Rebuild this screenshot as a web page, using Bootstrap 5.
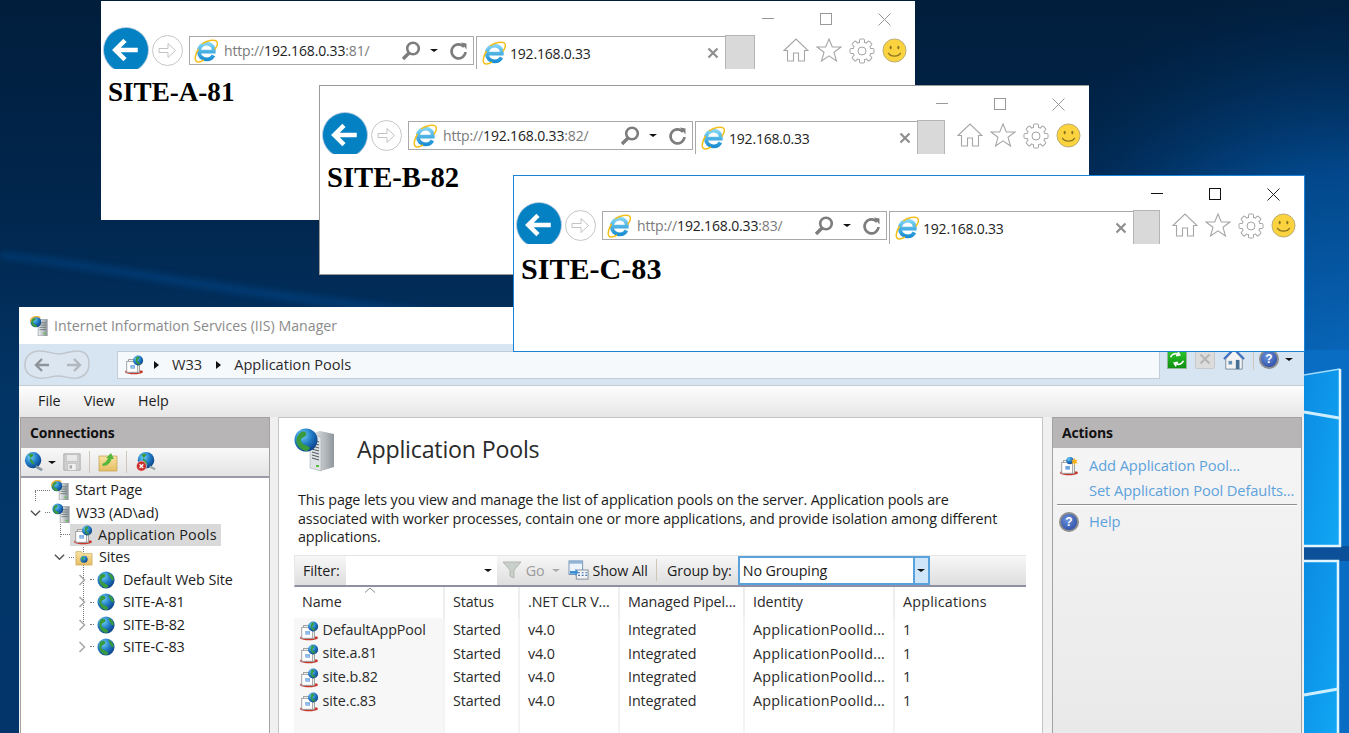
<!DOCTYPE html>
<html lang="en">
<head>
<meta charset="UTF-8">
<title>IIS sites</title>
<meta name="viewport" content="width=device-width, initial-scale=1">
<link href="https://cdn.jsdelivr.net/npm/bootstrap@5.3.0/dist/css/bootstrap.min.css" rel="stylesheet">
<style>
html, body { margin: 0; height: 733px; overflow: hidden; background: #02254b; }
.desk { position: relative; width: 1349px; height: 733px; overflow: hidden; font-family: "Open Sans", "Noto Sans", sans-serif; font-size: 13.3px; color: #1c1c1c; }
.wallpaper { position: absolute; left: 0; top: 0; }

/* browser windows */
.ie-win { position: absolute; background: #fff; display: flex; flex-direction: column; }
.ie-a { left: 101px; top: 1px; width: 814px; height: 219px; z-index: 1; }
.ie-b { left: 320px; top: 85px; height: 190px; z-index: 2; border: 1px solid #9b9b9b; border-right: 0; margin-left: -1px; width: 770px; }
.ie-c { left: 514px; top: 175px; height: 177px; z-index: 4; border: 1px solid #1883d7; margin-left: -1px; width: 792px; }
.ie-caption { height: 26px; position: relative; flex: none; }
.ie-min { position: absolute; right: 141px; top: 17px; width: 12px; height: 1px; background: #999; }
.ie-max { position: absolute; right: 83px; top: 12px; width: 12px; height: 12px; border: 1px solid #999; }
.ie-close { position: absolute; right: 24px; top: 12px; width: 13px; height: 13px; }
.ie-c .ie-min { background: #111; }
.ie-c .ie-max { border-color: #111; }
.ie-bar { height: 42px; flex: none; overflow: hidden; padding-left: 2px; }
.ie-back { width: 46px; height: 46px; flex: none; }
.ie-fwd { width: 31px; height: 31px; margin-left: 3px; margin-right: 6px; flex: none; }
.ie-addr { width: 285px; height: 29px; border: 1px solid #a9a9a9; margin-top: 9px; padding-left: 4px; padding-right: 4px; flex: none; font-size: 14px; color: #7a7a7a; letter-spacing: -.15px; }
.ie-addr b { font-weight: 400; color: #222; }
.ie-addr > svg { margin-right: 6px; }
.ie-addr-tools { gap: 9px; }
.ie-addr-tools .iis-down { margin-right: 2px; }
.ie-tab { height: 33px; margin-top: 9px; margin-left: 2px; border-left: 1px solid #a9a9a9; border-top: 1px solid #a9a9a9; padding-left: 5px; padding-right: 2px; flex: 1 1 auto; font-size: 14px; color: #222; letter-spacing: -.2px; }
.ie-new { width: 30px; height: 34px; background: #d9d9d9; border: 1px solid #b5b5b5; border-bottom: 0; margin-top: 8px; flex: none; }
.ie-tools { width: 160px; flex: none; padding: 11px 8px 0 0; gap: 7px; justify-content: flex-end; }
.ie-b .ie-new { width: 28px; }
.ie-c .ie-new { width: 27px; }
.ie-b .ie-tools, .ie-c .ie-tools { width: 144px; }
.ie-page { font-family: "Liberation Serif", serif; font-weight: 700; font-size: 27.1px; line-height: 32px; color: #000; padding: 7px 0 0 7px; margin: 0; }
.ie-b .ie-page { font-size: 28.65px; }
.ie-c .ie-page { font-size: 30.1px; padding-top: 9px; }

/* iis manager */
.iis-win { position: absolute; left: 19px; top: 307px; width: 1285px; height: 426px; z-index: 3; background: #f0f0f0; display: flex; flex-direction: column; }
.iis-title { height: 37px; background: #fff; color: #8b8b8b; font-size: 14.2px; padding-left: 10px; gap: 5px; flex: none; }
.iis-nav { height: 42px; background: #d7e4f1; border-bottom: 1px solid #c3cbd3; padding: 0 6px 0 4px; flex: none; }
.iis-crumb { width: 1043px; height: 28px; margin-left: 26px; background: #f6f9fc; border: 1px solid #c2ccd6; padding-left: 6px; gap: 6px; flex: none; font-size: 14.6px; color: #2a2a2a; }
.iis-crumb svg { margin-right: -4px; }
.iis-tri { width: 0; height: 0; border-left: 5px solid #111; border-top: 4px solid transparent; border-bottom: 4px solid transparent; margin: 0 7px 0 8px; }
.iis-down { width: 0; height: 0; border-top: 3px solid #111; border-left: 4px solid transparent; border-right: 4px solid transparent; }
.iis-navtools { margin-left: 7px; gap: 8px; margin-top: -11px; }
.iis-navtools .iis-sep { margin: 0; }
.iis-navtools .iis-help { margin-left: -3px; margin-right: -2px; }
.iis-menu { height: 31px; background: linear-gradient(#fdfdfd, #e6e6e6); padding-left: 19px; padding-bottom: 2px; gap: 23px; flex: none; font-size: 14.3px; color: #1c1c1c; }
.iis-body { flex: 1 1 auto; min-height: 0; padding-left: 1px; gap: 8px; }
.iis-side { width: 250px; flex: none; background: #fff; border: 1px solid #a2a2a2; border-bottom: 0; }
.iis-actions { width: 250px; flex: none; background: linear-gradient(#f6f6f6, #e9e9e9); border: 1px solid #a2a2a2; border-bottom: 0; margin-left: 1px; }
.iis-head { height: 30px; background: #b8b5b6; font-weight: 700; padding-left: 9px; padding-bottom: 1px; font-size: 14px; color: #111; letter-spacing: -.2px; flex: none; }
.iis-tbar { height: 30px; background: linear-gradient(#f8f8f8, #e4e4e4); border-bottom: 2px solid #9a9aa8; padding-left: 2px; gap: 3px; }
.iis-sep { width: 1px; height: 22px; background: #cfc8b8; margin: 0 5px; flex: none; }
.iis-tree { padding-top: 1px; font-size: 14.4px; letter-spacing: -.1px; }
.iis-node { height: 22.4px; position: relative; }
.iis-node svg { flex: none; }
.iis-lbl { padding: 0 3px; margin-left: 2px; line-height: 22px; }
.iis-lbl-site { margin-left: 5px; }
.iis-sel { background: #d9d9d9; padding-left: 3px; padding-right: 1px; }
.iis-sel .iis-lbl { letter-spacing: .2px; }
.iis-dots { width: 9px; height: 0; border-top: 1px dotted #777; flex: none; }
.iis-vdots { position: absolute; width: 0; border-left: 1px dotted #777; }
.iis-center { width: 765px; flex: none; background: #fff; border: 1px solid #c4c4c4; border-bottom: 0; padding: 0 16px 0 15px; }
.iis-h { height: 62px; gap: 21px; padding-top: 1px; margin-bottom: 11px; }
.iis-h span { font-size: 23.2px; color: #2a2a2a; letter-spacing: -.2px; }
.iis-desc { font-size: 14.35px; line-height: 18.6px; margin: 0 0 8px 4px; letter-spacing: -.13px; width: 720px; }
.iis-filter { height: 32px; background: linear-gradient(#f7f7f7, #dedede); border-top: 1px solid #e4e4e4; border-bottom: 2px solid #8f8fa3; border-left: 1px solid #e8e8e8; padding-left: 8px; font-size: 14.3px; letter-spacing: -.1px; }
.iis-filter .iis-sep { margin: 0 10px 0 8px; }
.iis-input { width: 151px; height: 29px; background: #fff; margin-left: 6px; margin-right: 5px; padding-right: 5px; flex: none; }
.iis-grey { color: #9a9a9a; }
.iis-select { width: 192px; height: 29px; margin-left: 6px; border: 2px solid #5aa2dc; background: #fff; padding-left: 3px; flex: none; }
.iis-select i { width: 15px; height: 100%; background: #cfe6fa; border-left: 2px solid #5aa2dc; }
table.iis-grid { --bs-table-bg: transparent; table-layout: fixed; width: 733px; font-size: 14.3px; letter-spacing: -.1px; color: #2a2a2a; margin: 0; }
.iis-grid th { font-weight: 400; height: 31px; padding: 0 0 1px 8px !important; vertical-align: middle; border-right: 2px solid #eee; position: relative; background: #fff; }
.iis-grid th:last-child, .iis-grid td:last-child { border-right: 0; }
.iis-grid th:last-child { letter-spacing: .2px; }
.iis-grid td { height: 23.7px; padding: 0 0 0 8px !important; vertical-align: middle; border-right: 2px solid #f3f3f3; white-space: nowrap; }
.iis-grid td:nth-child(5) { letter-spacing: .2px; }
.iis-grid td:first-child { background: #f7f7f7; padding-left: 5px !important; }
.iis-grid tr.iis-rest td { height: 40px; }
.iis-caret { position: absolute; left: 70px; top: 0; width: 12px; height: 6px; }
.iis-link { color: #5ea2dc; font-size: 14.7px; letter-spacing: -.1px; }
.iis-act { height: 25px; padding-left: 6px; gap: 10px; }
.iis-act-first { margin-top: 5px; }
.iis-act-sep { height: 0; border-top: 1px solid #8f8f8f; margin: 1px 4px 4px 4px; box-shadow: 0 1px 0 #fff; }
.iis-help { width: 20px; height: 20px; border-radius: 50%; flex: none; background: radial-gradient(circle at 40% 35%, #6d93dc, #1f3f9c); border: 2px solid #8d8d8d; color: #fff; font: 700 12px/16px "Liberation Sans", sans-serif; text-align: center; }
</style>
</head>
<body>

<svg width="0" height="0" style="position:absolute">
  <defs>
    <radialGradient id="gradGlobe" cx="35%" cy="30%" r="75%"><stop offset="0" stop-color="#6fd0f5"/><stop offset=".55" stop-color="#1f79c4"/><stop offset="1" stop-color="#0c3f86"/></radialGradient>
    <linearGradient id="gradTower" x1="0" x2="1" y1="0" y2="0"><stop offset="0" stop-color="#f2f2f2"/><stop offset="1" stop-color="#8f979d"/></linearGradient>
    <linearGradient id="gradFolder" x1="0" x2="0" y1="0" y2="1"><stop offset="0" stop-color="#f8e3a4"/><stop offset="1" stop-color="#e5bd63"/></linearGradient>
    <linearGradient id="gradGreen" x1="0" x2="0" y1="0" y2="1"><stop offset="0" stop-color="#2ec92e"/><stop offset="1" stop-color="#0f8f0f"/></linearGradient>
    <linearGradient id="gradIe" x1="0" x2="0" y1="0" y2="1"><stop offset="0" stop-color="#7fd4f5"/><stop offset="1" stop-color="#1b8fd3"/></linearGradient>
  </defs>
  <symbol id="icoBack" viewBox="0 0 45 45"><circle cx="22.5" cy="22.5" r="22" fill="#0481c3" stroke="#bcd" stroke-width=".8"/><path d="M12 22.5h22M21.5 13l-9.5 9.5 9.5 9.5" fill="none" stroke="#fff" stroke-width="4.4"/></symbol>
  <symbol id="icoFwd" viewBox="0 0 31 31"><circle cx="15.5" cy="15.5" r="15" fill="#fff" stroke="#c6c6c6"/><path d="M7 13.5h9V8.5l7.5 7-7.5 7v-5H7z" fill="#fff" stroke="#c2c2c2"/></symbol>
  <symbol id="icoIe" viewBox="0 0 24 24"><path d="M6 12.600h13.800c.4-5-2.900-8-7.100-8-4.500 0-7.900 3.300-7.900 8 0 4.500 3.400 7.800 7.900 7.800 3.100 0 5.500-1.400 6.700-4" fill="none" stroke="url(#gradIe)" stroke-width="3.800"/><path d="M8 5C13 1.500 20 .3 22.300 2c2 1.600.6 5.500-1.500 8.500M4.500 10C2 14 .4 19.500 1.800 21.700c1.500 1.900 5.200 1.100 8.200-.7" fill="none" stroke="#f4bf1a" stroke-width="1.500"/></symbol>
  <symbol id="icoSearch" viewBox="0 0 20 20"><circle cx="12" cy="7.500" r="5.800" fill="none" stroke="#7d7d7d" stroke-width="2.600"/><path d="M8 12l-6 6" stroke="#7d7d7d" stroke-width="3.400"/></symbol>
  <symbol id="icoReload" viewBox="0 0 20 20"><path d="M15 6a7 7 0 1 0 1.500 5" fill="none" stroke="#7d7d7d" stroke-width="2.600"/><path d="M12 1.500l5.500 1v6z" fill="#7d7d7d"/></symbol>
  <symbol id="icoHome" viewBox="0 0 26 24"><path d="M1 12.500L13 1l12 11.500h-3.500V23h-6v-8h-5v8h-6V12.500z" fill="#fff" stroke="#a6a6a6" stroke-width="1.100"/></symbol>
  <symbol id="icoStar" viewBox="0 0 26 24"><path d="M13 1l3.300 8H25l-7 5.300L20.500 23 13 17.800 5.500 23 8 14.300 1 9h8.700z" fill="#fff" stroke="#a6a6a6" stroke-width="1.100"/></symbol>
  <symbol id="icoGear" viewBox="0 0 26 26"><g fill="#fff" stroke="#a6a6a6" stroke-width="1"><circle cx="13" cy="13" r="9.200"/><rect x="10.500" y="1" width="5" height="24" rx="1"/><rect x="10.500" y="1" width="5" height="24" rx="1" transform="rotate(45 13 13)"/><rect x="10.500" y="1" width="5" height="24" rx="1" transform="rotate(90 13 13)"/><rect x="10.500" y="1" width="5" height="24" rx="1" transform="rotate(135 13 13)"/></g><circle cx="13" cy="13" r="8.600" fill="#fff"/><circle cx="13" cy="13" r="4" fill="#fff" stroke="#a6a6a6"/></symbol>
  <symbol id="icoSmile" viewBox="0 0 26 26"><circle cx="13" cy="13" r="12" fill="#fbd33f" stroke="#b8ac7c"/><ellipse cx="9" cy="10" rx="1.100" ry="1.900" fill="#8a7420"/><ellipse cx="17" cy="10" rx="1.100" ry="1.900" fill="#8a7420"/><path d="M6.500 15.500c2.500 4.500 10.500 4.500 13 0" fill="none" stroke="#8a7420" stroke-width="1.300"/></symbol>
  <symbol id="icoGlobe" viewBox="0 0 20 20"><circle cx="10" cy="10" r="9.500" fill="url(#gradGlobe)"/><path d="M4 4c3-2 6 0 5 2S5 7 5 10s3 3 6 5 1 3-1 4C5 18 0 12 4 4zM13 2c3 1 6 5 5.500 8-2 1-3-1-4-3s-2-3-1.500-5z" fill="#3a9a3e"/></symbol>
  <symbol id="icoServer" viewBox="0 0 20 22"><rect x="9" y="4" width="10" height="18" fill="url(#gradTower)" stroke="#7b858c" stroke-width=".6"/><path d="M10.500 7.500h7M10.500 10h7M10.500 12.500h7M10.500 15h7" stroke="#566" stroke-width=".8"/><rect x="15" y="18.500" width="2.500" height="1.500" fill="#55c040"/><circle cx="6.500" cy="6.500" r="6" fill="url(#gradGlobe)"/><path d="M3 3c2-1.500 4-.5 3 1S3 5 3.500 7s3 2.500 4 3.500-1 2-2 1.500C2 11 0 7 3 3z" fill="#3a9a3e"/></symbol>
  <symbol id="icoStart" viewBox="0 0 20 22"><use href="#icoServer" width="20" height="22"/><path d="M.5 7C.5 3 3.500 .6 7.500.6c1.500 0 3 .5 4 1.400" fill="none" stroke="#f0b23a" stroke-width="1.500"/></symbol>
  <symbol id="icoServerBig" viewBox="0 0 42 44"><path d="M16 6l10-3 14 3v33l-13 4-11-3z" fill="url(#gradTower)"/><path d="M16 6l11 3v34l-11-3z" fill="#dfe3e6" stroke="#9aa2a8" stroke-width=".5"/><path d="M18 12l7 2M18 15l7 2M18 18l7 2M18 21l7 2M18 24l7 2M18 27l7 2M18 30l7 2" stroke="#555e64" stroke-width="1.100"/><rect x="22" y="37" width="3" height="2" fill="#55c040"/><circle cx="12" cy="12" r="11.500" fill="url(#gradGlobe)"/><path d="M6 5c4-3 7-1 6 2S6 9 7 13s6 4 8 6-1 4-3 4C5 22-2 13 6 5z" fill="#3a9a3e"/></symbol>
  <symbol id="icoPool" viewBox="0 0 22 22"><path d="M1 19c4 3 16 3 20 0l-1-2H2z" fill="#c9372c"/><rect x="5" y="5" width="12" height="14" fill="#f7f7f7" stroke="#9a9a9a"/><rect x="3" y="7" width="12" height="12" fill="#fff" stroke="#9a9a9a"/><rect x="7" y="11" width="5" height="4" fill="#6aa5df"/><path d="M8 12h3M8 13.500h3" stroke="#fff" stroke-width=".5"/><circle cx="15.500" cy="6" r="5.500" fill="url(#gradGlobe)"/><path d="M14 2c2-1 3 0 2.500 1.500S14 5 15 7s3 1 3 3c-3 2-7-3-4-8z" fill="#3a9a3e"/></symbol>
  <symbol id="icoPoolAdd" viewBox="0 0 22 22"><path d="M1 19c4 3 16 3 20 0l-1-2H2z" fill="#c9372c"/><rect x="5" y="5" width="12" height="14" fill="#f7f7f7" stroke="#9a9a9a"/><rect x="3" y="7" width="12" height="12" fill="#fff" stroke="#9a9a9a"/><rect x="7" y="11" width="5" height="4" fill="#6aa5df"/><circle cx="12" cy="5" r="4" fill="url(#gradGlobe)"/><path d="M17 2l1 2.500 2.500-.500-1.500 2.200 1.500 2-2.500-.2-1 2.500-1-2.500-2.500.2 1.500-2-1.500-2.200 2.500.5z" fill="#f5b21e"/></symbol>
  <symbol id="icoFolderGlobe" viewBox="0 0 20 20"><path d="M1 4h6l2 2h10v13H1z" fill="url(#gradFolder)" stroke="#c9a656" stroke-width=".7"/><circle cx="10" cy="12.500" r="4" fill="url(#gradGlobe)"/><path d="M8 10c2-1 3 0 2 1.500s-2 1-1 3c-2-.5-2.500-3-1-4.500z" fill="#3a9a3e"/></symbol>
  <symbol id="icoChevDown" viewBox="0 0 12 8"><path d="M1 1.500L6 6.500l5-5" fill="none" stroke="#555" stroke-width="1.600"/></symbol>
  <symbol id="icoChevRight" viewBox="0 0 8 12"><path d="M1.500 1l5 5-5 5" fill="none" stroke="#aaa" stroke-width="1.600"/></symbol>
  <symbol id="icoSave" viewBox="0 0 22 22"><path d="M1 1h20v20H1z" fill="#cfcfcf" stroke="#a5a5a5"/><rect x="4" y="2" width="14" height="8" fill="#e9e9e9" stroke="#b5b5b5" stroke-width=".6"/><rect x="6" y="13" width="10" height="8" fill="#f0f0f0" stroke="#b5b5b5" stroke-width=".6"/><rect x="8" y="15" width="3" height="4" fill="#aaa"/></symbol>
  <symbol id="icoFolderUp" viewBox="0 0 20 20"><path d="M1 4h18v15H1z" fill="url(#gradFolder)" stroke="#c9a656" stroke-width=".8"/><path d="M4 12c3-1 5-3 6-6L8 6l5-5 3 6h-2.500c-1 4-4 7-8.500 7z" fill="#55b83c"/></symbol>
  <symbol id="icoDisconnect" viewBox="0 0 24 22"><circle cx="12" cy="9" r="9" fill="url(#gradGlobe)"/><path d="M7 3c3-2 6-1 5 1S8 6 9 10s5 3 6 5" fill="#3a9a3e"/><path d="M16 16l6 3" stroke="#9aa" stroke-width="2.500"/><circle cx="7" cy="15.500" r="5.500" fill="#c9302c" stroke="#fff" stroke-width=".6"/><path d="M5 13.500l4 4M9 13.500l-4 4" stroke="#fff" stroke-width="1.400"/></symbol>
  <symbol id="icoConnect" viewBox="0 0 24 22"><circle cx="11" cy="9" r="9" fill="url(#gradGlobe)"/><path d="M6 3c3-2 6-1 5 1S7 6 8 10s5 3 6 5" fill="#3a9a3e"/><path d="M14 16l7 4" stroke="#8a9aa5" stroke-width="3"/></symbol>
  <symbol id="icoRefresh" viewBox="0 0 22 22"><rect x=".5" y=".5" width="21" height="21" fill="url(#gradGreen)" stroke="#9bb59b"/><path d="M4 9c1-3 5-5 8-3M12 3l2 3.500-4 1M18 13c-1 3-5 5-8 3M10 19l-2-3.500 4-1" fill="none" stroke="#fff" stroke-width="1.800"/></symbol>
  <symbol id="icoStop" viewBox="0 0 22 22"><rect x=".5" y=".5" width="21" height="21" rx="2" fill="#dcdcdc" stroke="#c4c4c4"/><path d="M6 6l10 10M16 6L6 16" stroke="#b5b5b5" stroke-width="2.200"/></symbol>
  <symbol id="icoNavHome" viewBox="0 0 24 24"><path d="M3 12L12 2l9 10v11H3z" fill="#f4f4f4" stroke="#7a8a9a"/><path d="M1 12L12 1l11 11" fill="none" stroke="#3f6fc0" stroke-width="2.200"/><rect x="6" y="14" width="4" height="4" fill="#6a8fb5"/><rect x="14" y="13" width="4" height="10" fill="#4a6f95"/></symbol>
  <symbol id="icoFunnel" viewBox="0 0 20 20"><path d="M1 2h18l-7 8v8l-4-2v-6z" fill="#c9cfc9" stroke="#b5b5b5"/></symbol>
  <symbol id="icoShowAll" viewBox="0 0 24 22"><rect x="1" y="1" width="15" height="15" fill="#eef4fb" stroke="#6f8fb0"/><rect x="1" y="1" width="15" height="3" fill="#8fb3d6"/><rect x="9" y="11" width="13" height="10" fill="#f4f4f4" stroke="#7a8a9a"/><path d="M11 14h2M15 14h2M19 14h2M11 17h2M15 17h2M19 17h2" stroke="#3d6fa8" stroke-width="1.300"/><path d="M2 12h6v-2.500l3.500 4-3.500 4V15H2z" fill="#3d8fd6"/></symbol>
  <symbol id="icoNavPill" viewBox="0 0 68 32"><path d="M2 16C2 6 9 2 17 2c9 0 12 3 19 3 8 0 9-3 18-3 8 0 12 5 12 13s-5 13-12 14c-9 1-11-2-19-2-8 0-10 3-19 2C9 28 2 25 2 16z" fill="#dce6f0" stroke="#c0c6cc" stroke-width="1.500"/><path d="M13 16h13M19 10l-6 6 6 6" fill="none" stroke="#8e9499" stroke-width="2.400"/><path d="M44 16h13M51 10l6 6-6 6" fill="none" stroke="#b2b8bd" stroke-width="2.400"/></symbol>
</svg>

<div class="desk">
  <!-- desktop wallpaper -->
  <svg class="wallpaper" width="1349" height="733" viewBox="0 0 1349 733">
    <defs>
      <linearGradient id="wallBase" x1="0" x2="0" y1="0" y2="1"><stop offset="0" stop-color="#011e3c"/><stop offset=".3" stop-color="#01274f"/><stop offset=".55" stop-color="#023566"/><stop offset="1" stop-color="#03356b"/></linearGradient>
      <radialGradient id="wallGlow" gradientUnits="userSpaceOnUse" cx="1349" cy="400" r="420"><stop offset="0" stop-color="#0a6dc4"/><stop offset=".55" stop-color="#024a90" stop-opacity=".9"/><stop offset="1" stop-color="#01274f" stop-opacity="0"/></radialGradient>
      <linearGradient id="wallPane" x1="0" x2="1" y1="0" y2="1"><stop offset="0" stop-color="#0a8be2"/><stop offset="1" stop-color="#12a7f5"/></linearGradient>
      <filter id="wallBlur"><feGaussianBlur stdDeviation="3"/></filter>
      <filter id="wallSoft"><feGaussianBlur stdDeviation=".7"/></filter>
    </defs>
    <rect width="1349" height="733" fill="url(#wallBase)"/>
    <rect width="1349" height="733" fill="url(#wallGlow)"/>
    <path d="M0 252C100 262 220 285 330 298L520 320L520 330L330 306C220 294 100 270 0 258z" fill="#05478a" opacity=".55" filter="url(#wallBlur)"/>
    <rect x="1304" y="350" width="45" height="383" fill="#0a6dc4"/>
    <path d="M1304 376l36-7v177h-36z" fill="url(#wallPane)"/>
    <path d="M1304 561h34v172h-34z" fill="url(#wallPane)"/>
    <rect x="1304" y="546" width="45" height="15" fill="#0b5099"/>
    <g filter="url(#wallSoft)">
      <path d="M1304 375l36-6" stroke="#9fdcff" stroke-width="1.500"/>
      <path d="M1340 369v177h-36" fill="none" stroke="#dff5ff" stroke-width="2.500"/>
      <path d="M1304 412l35 6" stroke="#cceeff" stroke-width="3"/>
      <path d="M1304 561h34v172" fill="none" stroke="#dff5ff" stroke-width="2.500"/>
      <path d="M1304 695l34-6" stroke="#cceeff" stroke-width="3"/>
    </g>
  </svg>

  <!-- SITE-A -->
  <div class="ie-win ie-a">
    <div class="ie-caption">
      <div class="ie-min"></div><div class="ie-max"></div>
      <svg class="ie-close" viewBox="0 0 13 13"><path d="M.5.500l12 12M12.500.500l-12 12" stroke="#999"/></svg>
    </div>
    <div class="ie-bar d-flex">
      <svg class="ie-back"><use href="#icoBack"/></svg>
      <svg class="ie-fwd mt-2"><use href="#icoFwd"/></svg>
      <div class="ie-addr d-flex align-items-center">
        <svg width="24" height="24"><use href="#icoIe"/></svg>
        <span>http://<b>192.168.0.33</b>:81/</span>
        <span class="ms-auto d-flex align-items-center ie-addr-tools">
          <svg width="20" height="20"><use href="#icoSearch"/></svg>
          <span class="iis-down"></span>
          <svg width="20" height="20"><use href="#icoReload"/></svg>
        </span>
      </div>
      <div class="ie-tab d-flex align-items-center">
        <svg width="24" height="24" class="me-1"><use href="#icoIe"/></svg>
        <span>192.168.0.33</span>
        <svg class="ms-auto me-1" width="12" height="12" viewBox="0 0 12 12"><path d="M1.500 1.500l9 9M10.500 1.500l-9 9" stroke="#8e8e8e" stroke-width="2.200"/></svg>
      </div>
      <div class="ie-new"></div>
      <div class="ie-tools d-flex">
        <svg width="26" height="24"><use href="#icoHome"/></svg>
        <svg width="26" height="24"><use href="#icoStar"/></svg>
        <svg width="26" height="26"><use href="#icoGear"/></svg>
        <svg width="25" height="25"><use href="#icoSmile"/></svg>
      </div>
    </div>
    <h1 class="ie-page">SITE-A-81</h1>
  </div>

  <!-- SITE-B -->
  <div class="ie-win ie-b">
    <div class="ie-caption">
      <div class="ie-min"></div><div class="ie-max"></div>
      <svg class="ie-close" viewBox="0 0 13 13"><path d="M.5.500l12 12M12.500.500l-12 12" stroke="#999"/></svg>
    </div>
    <div class="ie-bar d-flex">
      <svg class="ie-back"><use href="#icoBack"/></svg>
      <svg class="ie-fwd mt-2"><use href="#icoFwd"/></svg>
      <div class="ie-addr d-flex align-items-center">
        <svg width="24" height="24"><use href="#icoIe"/></svg>
        <span>http://<b>192.168.0.33</b>:82/</span>
        <span class="ms-auto d-flex align-items-center ie-addr-tools">
          <svg width="20" height="20"><use href="#icoSearch"/></svg>
          <span class="iis-down"></span>
          <svg width="20" height="20"><use href="#icoReload"/></svg>
        </span>
      </div>
      <div class="ie-tab d-flex align-items-center">
        <svg width="24" height="24" class="me-1"><use href="#icoIe"/></svg>
        <span>192.168.0.33</span>
        <svg class="ms-auto me-1" width="12" height="12" viewBox="0 0 12 12"><path d="M1.500 1.500l9 9M10.500 1.500l-9 9" stroke="#8e8e8e" stroke-width="2.200"/></svg>
      </div>
      <div class="ie-new"></div>
      <div class="ie-tools d-flex">
        <svg width="26" height="24"><use href="#icoHome"/></svg>
        <svg width="26" height="24"><use href="#icoStar"/></svg>
        <svg width="26" height="26"><use href="#icoGear"/></svg>
        <svg width="25" height="25"><use href="#icoSmile"/></svg>
      </div>
    </div>
    <h1 class="ie-page">SITE-B-82</h1>
  </div>

  <!-- IIS manager -->
  <div class="iis-win">
    <div class="iis-title d-flex align-items-center">
      <svg width="20" height="20" viewBox="0 0 20 22"><use href="#icoStart"/></svg>
      <span>Internet Information Services (IIS) Manager</span>
    </div>
    <div class="iis-nav d-flex align-items-center">
      <svg width="68" height="32"><use href="#icoNavPill"/></svg>
      <div class="iis-crumb d-flex align-items-center">
        <svg width="20" height="20"><use href="#icoPool"/></svg>
        <span class="iis-tri"></span><span>W33</span>
        <span class="iis-tri"></span><span>Application Pools</span>
      </div>
      <div class="iis-navtools d-flex align-items-center">
        <svg width="20" height="20"><use href="#icoRefresh"/></svg>
        <svg width="20" height="20"><use href="#icoStop"/></svg>
        <svg width="22" height="22"><use href="#icoNavHome"/></svg>
        <span class="iis-sep"></span>
        <span class="iis-help">?</span>
        <span class="iis-down"></span>
      </div>
    </div>
    <div class="iis-menu d-flex align-items-center">
      <span>File</span><span>View</span><span>Help</span>
    </div>
    <div class="iis-body d-flex">
      <div class="iis-side">
        <div class="iis-head d-flex align-items-center">Connections</div>
        <div class="iis-tbar d-flex align-items-center">
          <svg width="22" height="20" viewBox="0 0 24 22"><use href="#icoConnect"/></svg>
          <span class="iis-down"></span>
          <svg width="18" height="18" class="ms-1"><use href="#icoSave"/></svg>
          <span class="iis-sep"></span>
          <svg width="20" height="20"><use href="#icoFolderUp"/></svg>
          <span class="iis-sep"></span>
          <svg width="22" height="22"><use href="#icoDisconnect"/></svg>
        </div>
        <div class="iis-tree position-relative">
          <div class="iis-vdots" style="left:14px;top:13px;height:10px"></div>
          <div class="iis-vdots" style="left:39px;top:33px;height:26px"></div>
          <div class="iis-vdots" style="left:62px;top:56px;height:90px"></div>
          <div class="iis-node d-flex align-items-center" style="padding-left:14px">
            <span class="iis-dots" style="width:15px"></span>
            <svg width="20" height="20" viewBox="0 0 20 22"><use href="#icoStart"/></svg>
            <span class="iis-lbl">Start Page</span>
          </div>
          <div class="iis-node d-flex align-items-center" style="padding-left:9px">
            <svg width="11" height="8" class="me-1"><use href="#icoChevDown"/></svg>
            <span class="iis-dots" style="width:5px;margin-right:1px"></span>
            <svg width="20" height="20" viewBox="0 0 20 22"><use href="#icoServer"/></svg>
            <span class="iis-lbl">W33 (AD\ad)</span>
          </div>
          <div class="iis-node d-flex align-items-center" style="padding-left:39px">
            <span class="iis-dots" style="width:10px"></span>
            <span class="iis-sel d-flex align-items-center">
              <svg width="20" height="20"><use href="#icoPool"/></svg>
              <span class="iis-lbl">Application Pools</span>
            </span>
          </div>
          <div class="iis-node d-flex align-items-center" style="padding-left:33px">
            <svg width="11" height="8" class="me-1"><use href="#icoChevDown"/></svg>
            <span class="iis-dots" style="width:5px;margin-right:1px"></span>
            <svg width="18" height="18"><use href="#icoFolderGlobe"/></svg>
            <span class="iis-lbl" style="margin-left:3px">Sites</span>
          </div>
          <div class="iis-node d-flex align-items-center" style="padding-left:57px">
            <svg width="8" height="12" class="me-1"><use href="#icoChevRight"/></svg>
            <span class="iis-dots" style="width:4px;margin-right:3px"></span>
            <svg width="18" height="18"><use href="#icoGlobe"/></svg>
            <span class="iis-lbl iis-lbl-site">Default Web Site</span>
          </div>
          <div class="iis-node d-flex align-items-center" style="padding-left:57px">
            <svg width="8" height="12" class="me-1"><use href="#icoChevRight"/></svg>
            <span class="iis-dots" style="width:4px;margin-right:3px"></span>
            <svg width="18" height="18"><use href="#icoGlobe"/></svg>
            <span class="iis-lbl iis-lbl-site">SITE-A-81</span>
          </div>
          <div class="iis-node d-flex align-items-center" style="padding-left:57px">
            <svg width="8" height="12" class="me-1"><use href="#icoChevRight"/></svg>
            <span class="iis-dots" style="width:4px;margin-right:3px"></span>
            <svg width="18" height="18"><use href="#icoGlobe"/></svg>
            <span class="iis-lbl iis-lbl-site">SITE-B-82</span>
          </div>
          <div class="iis-node d-flex align-items-center" style="padding-left:57px">
            <svg width="8" height="12" class="me-1"><use href="#icoChevRight"/></svg>
            <span class="iis-dots" style="width:4px;margin-right:3px"></span>
            <svg width="18" height="18"><use href="#icoGlobe"/></svg>
            <span class="iis-lbl iis-lbl-site">SITE-C-83</span>
          </div>
        </div>
      </div>

      <div class="iis-center">
        <div class="iis-h d-flex align-items-center">
          <svg width="42" height="44"><use href="#icoServerBig"/></svg>
          <span>Application Pools</span>
        </div>
        <p class="iis-desc">This page lets you view and manage the list of application pools on the server. Application pools are associated with worker processes, contain one or more applications, and provide isolation among different applications.</p>
        <div class="iis-filter d-flex align-items-center">
          <span>Filter:</span>
          <div class="iis-input d-flex align-items-center justify-content-end"><span class="iis-down"></span></div>
          <svg width="20" height="20"><use href="#icoFunnel"/></svg>
          <span class="iis-grey ms-1 me-2">Go</span>
          <span class="iis-down me-2" style="border-top-color:#aaa"></span>
          <svg width="22" height="20" viewBox="0 0 24 22"><use href="#icoShowAll"/></svg>
          <span style="margin-left:2px">Show All</span>
          <span class="iis-sep"></span>
          <span>Group by:</span>
          <div class="iis-select d-flex align-items-center">
            <span>No Grouping</span>
            <i class="ms-auto d-flex align-items-center justify-content-center"><span class="iis-down"></span></i>
          </div>
        </div>
        <table class="table table-borderless iis-grid">
          <colgroup><col style="width:150px"><col style="width:75px"><col style="width:100px"><col style="width:125px"><col style="width:150px"><col></colgroup>
          <thead>
            <tr>
              <th>Name<svg class="iis-caret" viewBox="0 0 12 6"><path d="M1 5.500l5-4.500 5 4.500" fill="none" stroke="#888"/></svg></th>
              <th>Status</th><th>.NET CLR V...</th><th>Managed Pipel...</th><th>Identity</th><th>Applications</th>
            </tr>
          </thead>
          <tbody>
            <tr><td><svg width="20" height="20" class="align-middle"><use href="#icoPool"/></svg> DefaultAppPool</td><td>Started</td><td>v4.0</td><td>Integrated</td><td>ApplicationPoolId...</td><td>1</td></tr>
            <tr><td><svg width="20" height="20" class="align-middle"><use href="#icoPool"/></svg> site.a.81</td><td>Started</td><td>v4.0</td><td>Integrated</td><td>ApplicationPoolId...</td><td>1</td></tr>
            <tr><td><svg width="20" height="20" class="align-middle"><use href="#icoPool"/></svg> site.b.82</td><td>Started</td><td>v4.0</td><td>Integrated</td><td>ApplicationPoolId...</td><td>1</td></tr>
            <tr><td><svg width="20" height="20" class="align-middle"><use href="#icoPool"/></svg> site.c.83</td><td>Started</td><td>v4.0</td><td>Integrated</td><td>ApplicationPoolId...</td><td>1</td></tr>
            <tr class="iis-rest"><td></td><td></td><td></td><td></td><td></td><td></td></tr>
          </tbody>
        </table>
      </div>

      <div class="iis-actions">
        <div class="iis-head d-flex align-items-center">Actions</div>
        <div class="iis-act iis-act-first d-flex align-items-center">
          <svg width="20" height="20"><use href="#icoPoolAdd"/></svg>
          <span class="iis-link">Add Application Pool...</span>
        </div>
        <div class="iis-act d-flex align-items-center">
          <span style="width:20px"></span>
          <span class="iis-link">Set Application Pool Defaults...</span>
        </div>
        <div class="iis-act-sep"></div>
        <div class="iis-act d-flex align-items-center">
          <span class="iis-help">?</span>
          <span class="iis-link">Help</span>
        </div>
      </div>
    </div>
  </div>

  <!-- SITE-C -->
  <div class="ie-win ie-c">
    <div class="ie-caption">
      <div class="ie-min"></div><div class="ie-max"></div>
      <svg class="ie-close" viewBox="0 0 13 13"><path d="M.5.500l12 12M12.500.500l-12 12" stroke="#222"/></svg>
    </div>
    <div class="ie-bar d-flex">
      <svg class="ie-back"><use href="#icoBack"/></svg>
      <svg class="ie-fwd mt-2"><use href="#icoFwd"/></svg>
      <div class="ie-addr d-flex align-items-center">
        <svg width="24" height="24"><use href="#icoIe"/></svg>
        <span>http://<b>192.168.0.33</b>:83/</span>
        <span class="ms-auto d-flex align-items-center ie-addr-tools">
          <svg width="20" height="20"><use href="#icoSearch"/></svg>
          <span class="iis-down"></span>
          <svg width="20" height="20"><use href="#icoReload"/></svg>
        </span>
      </div>
      <div class="ie-tab d-flex align-items-center">
        <svg width="24" height="24" class="me-1"><use href="#icoIe"/></svg>
        <span>192.168.0.33</span>
        <svg class="ms-auto me-1" width="12" height="12" viewBox="0 0 12 12"><path d="M1.500 1.500l9 9M10.500 1.500l-9 9" stroke="#8e8e8e" stroke-width="2.200"/></svg>
      </div>
      <div class="ie-new"></div>
      <div class="ie-tools d-flex">
        <svg width="26" height="24"><use href="#icoHome"/></svg>
        <svg width="26" height="24"><use href="#icoStar"/></svg>
        <svg width="26" height="26"><use href="#icoGear"/></svg>
        <svg width="25" height="25"><use href="#icoSmile"/></svg>
      </div>
    </div>
    <h1 class="ie-page">SITE-C-83</h1>
  </div>
</div>

<script src="https://cdn.jsdelivr.net/npm/bootstrap@5.3.0/dist/js/bootstrap.bundle.min.js"></script>
</body>
</html>
